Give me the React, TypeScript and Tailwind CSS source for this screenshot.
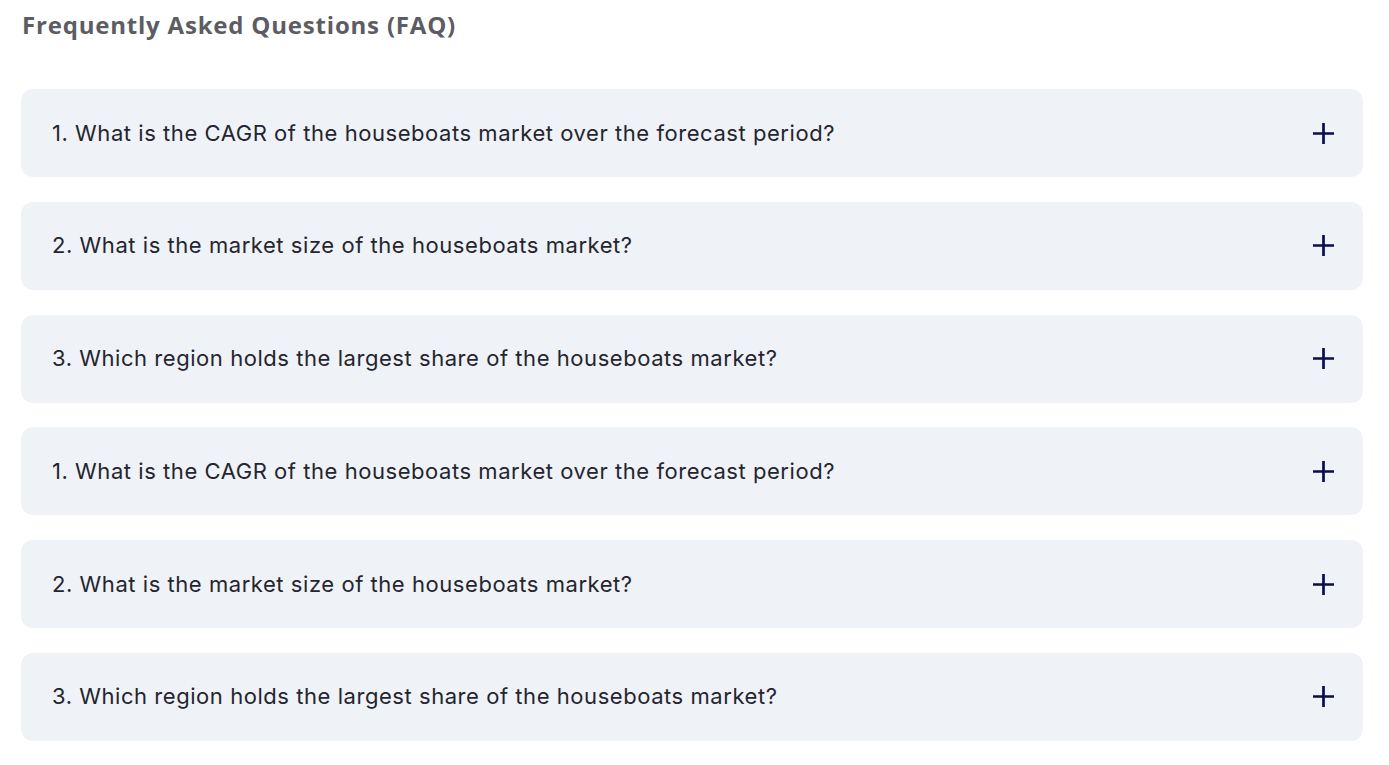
import React from "react";

const items = [
  "1. What is the CAGR of the houseboats market over the forecast period?",
  "2. What is the market size of the houseboats market?",
  "3. Which region holds the largest share of the houseboats market?",
  "1. What is the CAGR of the houseboats market over the forecast period?",
  "2. What is the market size of the houseboats market?",
  "3. Which region holds the largest share of the houseboats market?",
];

export default function App() {
  return (
    <div className="min-h-screen bg-white px-[21px] pt-[9px]">
      <h2 className="text-[24px] font-bold text-[#5c5c63] leading-[32px] pl-[1px] font-['Open_Sans',sans-serif] tracking-[0.8px]">
        Frequently Asked Questions (FAQ)
      </h2>
      <div className="mt-[48px] flex flex-col gap-[24.8px] w-[1342px]">
        {items.map((q, i) => (
          <div
            key={i}
            className="h-[88px] rounded-[12px] bg-[#eff2f7] flex items-center justify-between pl-[31px] pr-[29px]"
          >
            <span className="text-[22px] text-[#24252f] font-['Inter',sans-serif] tracking-[0.55px]">
              {q}
            </span>
            <svg width="21" height="21" viewBox="0 0 21 21">
              <path d="M10.5 0v21M0 10.5h21" stroke="#0b0e4a" strokeWidth="2.7" />
            </svg>
          </div>
        ))}
      </div>
    </div>
  );
}
